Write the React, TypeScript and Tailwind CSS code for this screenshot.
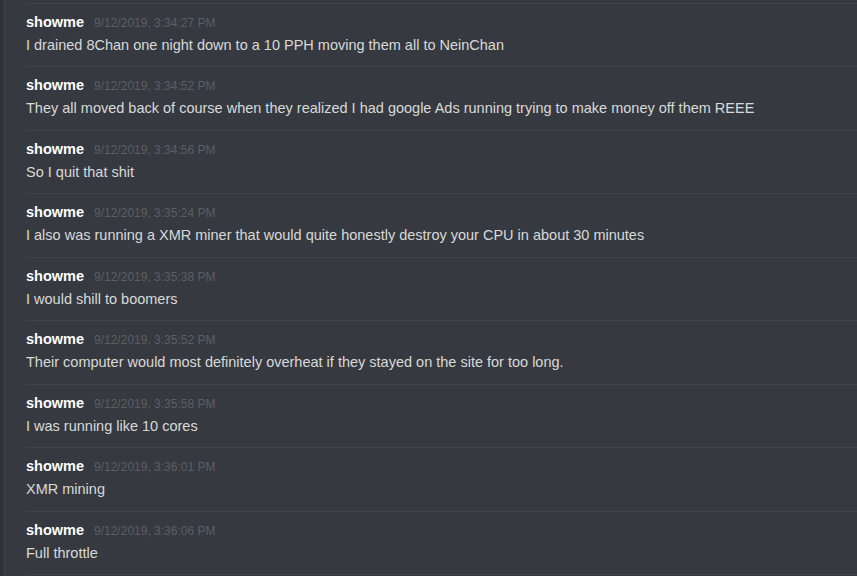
import React from "react";

const messages = [
  { time: "9/12/2019, 3:34:27 PM", text: "I drained 8Chan one night down to a 10 PPH moving them all to NeinChan" },
  { time: "9/12/2019, 3:34:52 PM", text: "They all moved back of course when they realized I had google Ads running trying to make money off them REEE" },
  { time: "9/12/2019, 3:34:56 PM", text: "So I quit that shit" },
  { time: "9/12/2019, 3:35:24 PM", text: "I also was running a XMR miner that would quite honestly destroy your CPU in about 30 minutes" },
  { time: "9/12/2019, 3:35:38 PM", text: "I would shill to boomers" },
  { time: "9/12/2019, 3:35:52 PM", text: "Their computer would most definitely overheat if they stayed on the site for too long." },
  { time: "9/12/2019, 3:35:58 PM", text: "I was running like 10 cores" },
  { time: "9/12/2019, 3:36:01 PM", text: "XMR mining" },
  { time: "9/12/2019, 3:36:06 PM", text: "Full throttle" },
];

const Message: React.FC<{ time: string; text: string; tall: boolean }> = ({ time, text, tall }) => {
  return (
    <div className={tall ? "ml-[23px] border-t border-[#41444a] pt-[9px] pb-[11px]" : "ml-[23px] border-t border-[#41444a] pt-[9px] pb-[10px]"}>
      <div className="flex items-center h-[20px]">
        <span className="text-[14.5px] font-bold text-white">showme</span>
        <span className="ml-[10px] text-[12px] text-[#5c5f64]">{time}</span>
      </div>
      <div className="mt-[1px] h-[22px] leading-[22px] text-[14.5px] text-[#d8d9da] whitespace-nowrap">{text}</div>
    </div>
  );
};

export default function App() {
  return (
    <div className="flex h-[576px] w-[857px] overflow-hidden bg-[#36393f] font-['Liberation_Sans',Arial,sans-serif]">
      <div className="w-[3px] shrink-0 bg-[#2f3136]" />
      <div className="flex-1 pt-[3px]">
        {messages.map((m, i) => (
          <Message key={i} time={m.time} text={m.text} tall={i % 2 === 1} />
        ))}
        <div className="ml-[23px] border-t border-[#41444a]" />
      </div>
    </div>
  );
}
